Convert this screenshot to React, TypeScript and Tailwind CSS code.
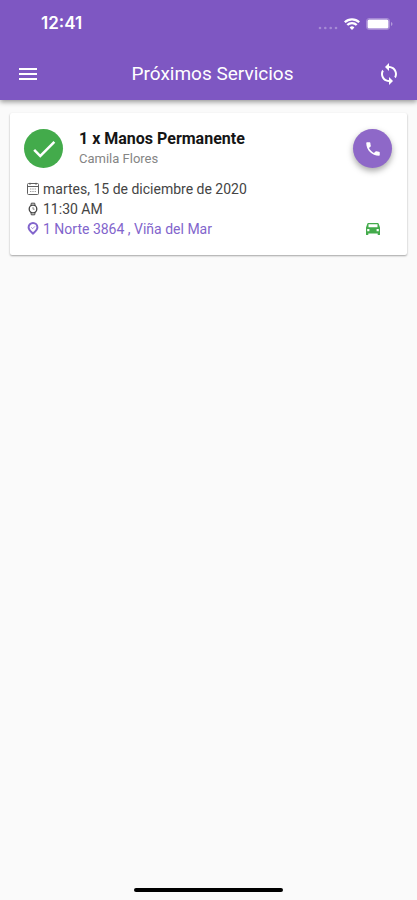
import React from 'react';
import { MdCheck, MdMenu, MdPhone, MdSync } from 'react-icons/md';

interface Service {
  title: string;
  client: string;
  date: string;
  time: string;
  address: string;
}

const services: Service[] = [
  {
    title: '1 x Manos Permanente',
    client: 'Camila Flores',
    date: 'martes, 15 de diciembre de 2020',
    time: '11:30 AM',
    address: '1 Norte 3864 , Viña del Mar',
  },
];

const CalendarIcon: React.FC = () => (
  <svg width="14" height="14" viewBox="0 0 14 14" fill="none" stroke="currentColor" opacity=".85" aria-hidden="true">
    <rect x="1.5" y="1.5" width="11" height="11" rx="1" />
    <path d="M1.5 4.5h11M4 .8v2M10 .8v2" />
    <path d="M4 7h6M4 9.5h6" strokeDasharray="1.4 .9" opacity=".6" />
  </svg>
);

const WatchIcon: React.FC = () => (
  <svg width="14" height="14" viewBox="0 0 14 14" fill="none" stroke="currentColor" aria-hidden="true">
    <circle cx="7" cy="7" r="3.8" strokeWidth="1.3" />
    <path d="M4.9 3.6 5.3 1.2h3.4l.4 2.4M4.9 10.4l.4 2.4h3.4l.4-2.4" />
    <path d="M7 5v2.2h1.6" opacity=".6" />
  </svg>
);

const PinIcon: React.FC = () => (
  <svg width="14" height="14" viewBox="0 0 14 14" fill="none" stroke="currentColor" aria-hidden="true">
    <path d="M7 11.6C4.8 9.4 2.6 7.6 2.6 5.4a4.400 4.400 0 0 1 8.800 0c0 2.200-2.200 4-4.400 6.200z" strokeWidth="2" />
    <path d="m5.200 5.300 1.500 1.400 2.300-2.400" opacity=".7" />
  </svg>
);

const CarIcon: React.FC = () => (
  <svg width="16" height="14" viewBox="0 0 16 14" fill="currentColor" aria-hidden="true">
    <path
      fillRule="evenodd"
      d="M3.300 1h9.400q.8 0 1 .8L15 5.500v7q0 .5-.5.5h-1.300q-.5 0-.5-.5V11.500H3.300v1q0 .5-.5.500H1.500Q1 13 1 12.500v-7l1.300-3.700Q2.500 1 3.300 1zM3.500 2.200v3h9v-3zM2.200 7v2.200h2.200V7zM11.600 7v2.200h2.200V7z"
    />
  </svg>
);

const StatusBar: React.FC = () => (
  <div className="flex h-12 items-center justify-between pl-[41px] pr-6">
    <span className="font-['Inter',sans-serif] text-[17px] font-semibold">12:41</span>
    <div className="flex items-center gap-1.5">
      <svg width="20" height="12" viewBox="0 0 20 12" fill="currentColor" opacity=".3" aria-hidden="true">
        <circle cx="2" cy="10" r="1.300" />
        <circle cx="7.300" cy="10" r="1.300" />
        <circle cx="12.700" cy="10" r="1.300" />
        <circle cx="18" cy="10" r="1.300" />
      </svg>
      <svg width="16" height="12" viewBox="0 0 16 12" fill="none" stroke="currentColor" strokeWidth="2.300" aria-hidden="true">
        <path d="M.8 4.300a10.200 10.200 0 0 1 14.400 0M3.300 7a6.600 6.600 0 0 1 9.400 0" />
        <path d="M8 12 5.600 9.400a3.400 3.400 0 0 1 4.800 0z" fill="currentColor" stroke="none" />
      </svg>
      <svg width="27" height="12" viewBox="0 0 27 12" aria-hidden="true">
        <rect x=".5" y=".5" width="23" height="11" rx="2.500" fill="none" stroke="currentColor" opacity=".3" />
        <rect x="1.500" y="1.500" width="21" height="9" rx="1.500" fill="currentColor" />
        <path d="M25 4q1.500.6 1.500 2T25 8z" fill="currentColor" opacity=".4" />
      </svg>
    </div>
  </div>
);

const ServiceCard: React.FC<{ service: Service }> = ({ service }) => (
  <article className="rounded-xs bg-white px-3.5 py-4 shadow-[0_1px_2px_rgba(0,0,0,0.35)]">
    <div className="flex items-start">
      <span className="flex size-[39px] items-center justify-center rounded-full bg-[#43ab4b] text-white">
        <MdCheck size={30} />
      </span>
      <div className="ml-4 flex-1">
        <h2 className="text-base leading-5 font-bold text-[#151515]">{service.title}</h2>
        <p className="text-[13px] leading-5 text-[#858585]">{service.client}</p>
      </div>
      <button
        aria-label="Llamar"
        className="mr-px flex size-[39px] items-center justify-center rounded-full bg-[#8e68c8] text-white shadow-[0_3px_6px_rgba(0,0,0,0.35)]"
      >
        <MdPhone size={18} />
      </button>
    </div>
    <div className="mt-2.5 pl-0.5 text-sm leading-5 text-[#444444]">
      <p className="flex items-center gap-[3px]">
        <CalendarIcon />
        {service.date}
      </p>
      <p className="flex items-center gap-[3px]">
        <WatchIcon />
        {service.time}
      </p>
      <div className="flex items-center justify-between pr-3">
        <a href="#mapa" className="flex items-center gap-[3px] text-[#8265cc]">
          <PinIcon />
          {service.address}
        </a>
        <span className="text-[#43ab4b]">
          <CarIcon />
        </span>
      </div>
    </div>
  </article>
);

const App: React.FC = () => {
  return (
    <div className="flex min-h-screen flex-col bg-[#fafafa] font-['Roboto',sans-serif]">
      <header className="bg-[#7e57c2] text-white shadow-[0_2px_5px_rgba(0,0,0,0.4)]">
        <StatusBar />
        <div className="flex h-[52px] items-center justify-between px-4">
          <button aria-label="Menú">
            <MdMenu size={24} />
          </button>
          <h1 className="ml-2 text-[19px] leading-6">Próximos Servicios</h1>
          <button aria-label="Actualizar">
            <MdSync size={24} />
          </button>
        </div>
      </header>
      <main className="flex-1 px-2.5 pt-[13px]">
        {services.map((service, index) => (
          <ServiceCard key={index} service={service} />
        ))}
      </main>
      <footer className="flex justify-center pb-2">
        <div className="h-1 w-[149px] rounded-full bg-black" />
      </footer>
    </div>
  );
};

export default App;
